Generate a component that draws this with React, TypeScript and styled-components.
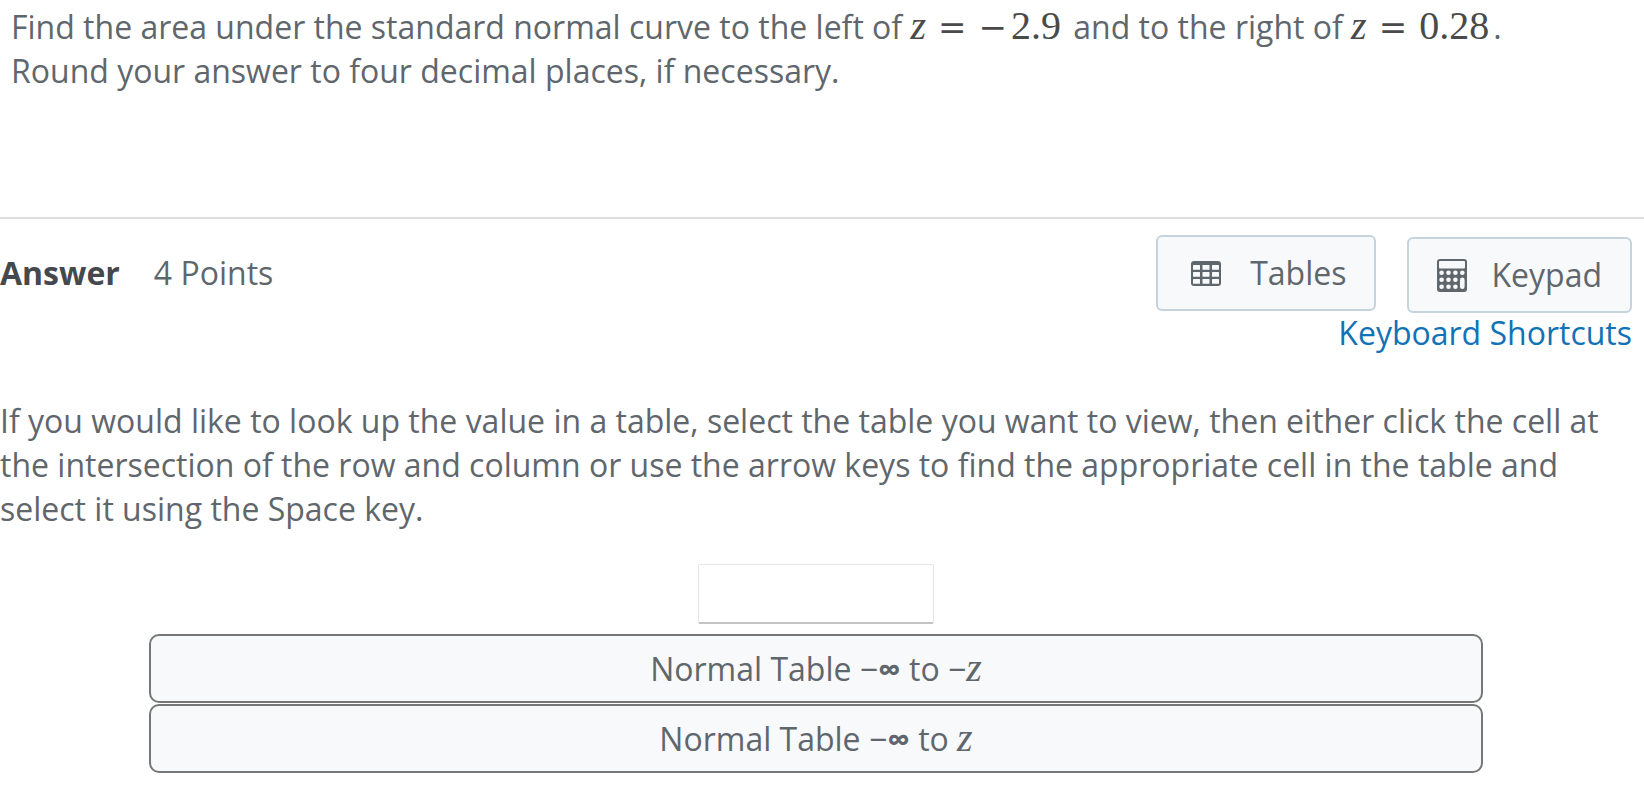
import React from "react";
import styled, { createGlobalStyle } from "styled-components";

const GlobalStyle = createGlobalStyle`
  * { box-sizing: border-box; }
  body {
    margin: 0;
    background: #fff;
    color: #5f676d;
    font-family: "Open Sans", "Noto Sans", sans-serif;
    font-size: 32px;
    line-height: 44px;
  }
`;

const Question = styled.section`
  padding: 5px 11px 124px;
  border-bottom: 2px solid #dcdddd;
`;

const Text = styled.p`
  margin: 0;
`;

const MathText = styled.span`
  margin-right: 4px;
  font-family: "Liberation Serif", serif;
  font-size: 40px;
  line-height: 1;
  color: #4a4a4a;
  white-space: nowrap;
`;

const Operator = styled.span<{ $after?: number }>`
  margin: 0 ${(p) => p.$after ?? 0}px 0 12px;
  font-family: "DejaVu Serif", serif;
  font-size: 34px;
  line-height: 0;
`;

const Header = styled.header`
  display: flex;
  align-items: flex-start;
  padding: 16px 12px 0 0;
`;

const Title = styled.h2`
  margin: 16px 34px 0 0;
  font-size: 32px;
  line-height: 44px;
  color: #44494e;
`;

const Points = styled.span`
  flex: 1;
  margin-top: 16px;
`;

const Tools = styled.div`
  display: flex;
  gap: 31px;
`;

const ToolButton = styled.button<{ $drop?: number }>`
  display: flex;
  align-items: center;
  gap: 24px;
  height: 76px;
  margin: ${(p) => p.$drop ?? 0}px 0 0;
  padding: 0 28px;
  border: 2px solid #c5d3dc;
  border-radius: 6px;
  background: #f8f9fb;
  color: inherit;
  font: inherit;
  cursor: pointer;
`;

const ShortcutsRow = styled.div`
  padding-right: 12px;
  line-height: 40px;
  text-align: right;
`;

const Shortcuts = styled.a`
  color: #1173b6;
  text-decoration: none;
`;

const Instructions = styled(Text)`
  padding: 46px 30px 0 0;
`;

const AnswerArea = styled.div`
  display: flex;
  flex-direction: column;
  align-items: center;
  padding: 33px 161px 15px 149px;
`;

const AnswerInput = styled.input`
  width: 236px;
  height: 60px;
  margin-bottom: 10px;
  padding: 0 12px;
  border: 1px solid #e6e6e6;
  border-bottom: 2px solid #c4c4c4;
  border-radius: 2px;
  background: #fff;
  color: inherit;
  font: inherit;
`;

const TableButton = styled.button`
  width: 100%;
  height: 69px;
  margin-bottom: 1px;
  padding: 0;
  border: 2px solid #777;
  border-radius: 10px;
  background: #f8f9fb;
  color: inherit;
  font: inherit;
  cursor: pointer;
`;

const Infinity = styled.span`
  font-weight: 700;
`;

const Variable = styled.i`
  font-family: "Liberation Serif", serif;
  font-size: 40px;
  line-height: 0;
`;

const TableIcon = () => (
  <svg width="40" height="32" viewBox="0 0 40 32" aria-hidden="true">
    <rect x="5" y="4" width="30" height="25" rx="3" fill="currentColor" />
    <g fill="#f8f9fb">
      {[8, 15, 22].map((y) =>
        [7, 16.5, 26].map((x) => <rect key={`${x}-${y}`} x={x} y={y} width="7" height="4.8" rx="0.5" />)
      )}
    </g>
  </svg>
);

const KeypadIcon = () => (
  <svg width="30" height="33" viewBox="0 0 30 33" aria-hidden="true">
    <rect width="30" height="33" rx="3" fill="currentColor" />
    <g fill="#f8f9fb">
      <rect x="2" y="2" width="26" height="7.4" rx="1" />
      {[13.8, 20.8, 27.8].map((y) =>
        [4.6, 11.5, 18.4, 25.3].map((x) =>
          x > 25 && y > 14 ? null : <circle key={`${x}-${y}`} cx={x} cy={y} r="2.3" />
        )
      )}
      <rect x="23" y="18.6" width="4.6" height="11.5" rx="2.3" />
    </g>
  </svg>
);

export default function App() {
  return (
    <main>
      <GlobalStyle />
      <Question>
        <Text>
          Find the area under the standard normal curve to the left of{" "}
          <MathText>
            <i>z</i>
            <Operator>=</Operator>
            <Operator $after={4}>−</Operator>2.9
          </MathText>{" "}
          and to the right of{" "}
          <MathText>
            <i>z</i>
            <Operator $after={12}>=</Operator>0.28
          </MathText>
          .<br />
          Round your answer to four decimal places, if necessary.
        </Text>
      </Question>
      <Header>
        <Title>Answer</Title>
        <Points>4 Points</Points>
        <Tools>
          <ToolButton type="button">
            <TableIcon />
            Tables
          </ToolButton>
          <ToolButton type="button" $drop={2}>
            <KeypadIcon />
            Keypad
          </ToolButton>
        </Tools>
      </Header>
      <ShortcutsRow>
        <Shortcuts href="#shortcuts">Keyboard Shortcuts</Shortcuts>
      </ShortcutsRow>
      <Instructions>
        If you would like to look up the value in a table, select the table you want to view, then
        either click the cell at the intersection of the row and column or use the arrow keys to
        find the appropriate cell in the table and select it using the Space key.
      </Instructions>
      <AnswerArea>
        <AnswerInput type="text" aria-label="Answer" />
        <TableButton type="button">
          Normal Table −<Infinity>∞</Infinity> to −<Variable>z</Variable>
        </TableButton>
        <TableButton type="button">
          Normal Table −<Infinity>∞</Infinity> to <Variable>z</Variable>
        </TableButton>
      </AnswerArea>
    </main>
  );
}
